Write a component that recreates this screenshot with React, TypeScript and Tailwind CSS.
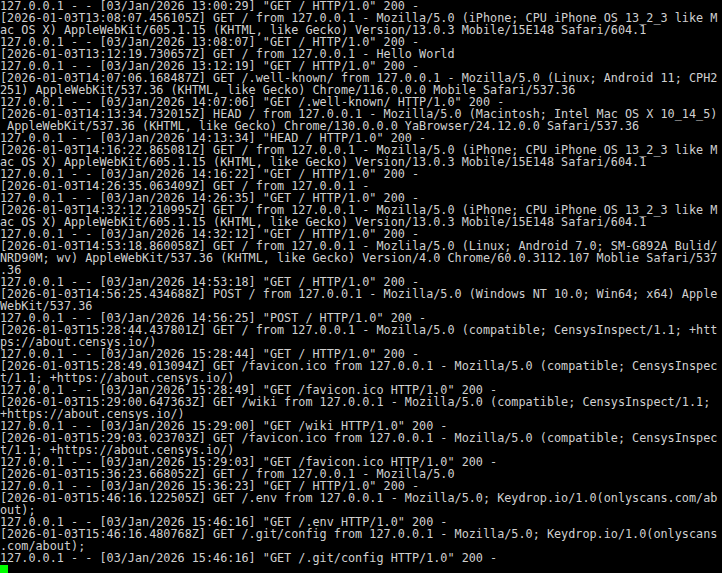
import React from 'react';

const lines: string[] = [
  '127.0.0.1 - - [03/Jan/2026 13:00:29] "GET / HTTP/1.0" 200 -',
  '[2026-01-03T13:08:07.456105Z] GET / from 127.0.0.1 - Mozilla/5.0 (iPhone; CPU iPhone OS 13_2_3 like M',
  'ac OS X) AppleWebKit/605.1.15 (KHTML, like Gecko) Version/13.0.3 Mobile/15E148 Safari/604.1',
  '127.0.0.1 - - [03/Jan/2026 13:08:07] "GET / HTTP/1.0" 200 -',
  '[2026-01-03T13:12:19.730657Z] GET / from 127.0.0.1 - Hello World',
  '127.0.0.1 - - [03/Jan/2026 13:12:19] "GET / HTTP/1.0" 200 -',
  '[2026-01-03T14:07:06.168487Z] GET /.well-known/ from 127.0.0.1 - Mozilla/5.0 (Linux; Android 11; CPH2',
  '251) AppleWebKit/537.36 (KHTML, like Gecko) Chrome/116.0.0.0 Mobile Safari/537.36',
  '127.0.0.1 - - [03/Jan/2026 14:07:06] "GET /.well-known/ HTTP/1.0" 200 -',
  '[2026-01-03T14:13:34.732015Z] HEAD / from 127.0.0.1 - Mozilla/5.0 (Macintosh; Intel Mac OS X 10_14_5)',
  ' AppleWebKit/537.36 (KHTML, like Gecko) Chrome/130.0.0.0 YaBrowser/24.12.0.0 Safari/537.36',
  '127.0.0.1 - - [03/Jan/2026 14:13:34] "HEAD / HTTP/1.0" 200 -',
  '[2026-01-03T14:16:22.865081Z] GET / from 127.0.0.1 - Mozilla/5.0 (iPhone; CPU iPhone OS 13_2_3 like M',
  'ac OS X) AppleWebKit/605.1.15 (KHTML, like Gecko) Version/13.0.3 Mobile/15E148 Safari/604.1',
  '127.0.0.1 - - [03/Jan/2026 14:16:22] "GET / HTTP/1.0" 200 -',
  '[2026-01-03T14:26:35.063409Z] GET / from 127.0.0.1 -',
  '127.0.0.1 - - [03/Jan/2026 14:26:35] "GET / HTTP/1.0" 200 -',
  '[2026-01-03T14:32:12.210995Z] GET / from 127.0.0.1 - Mozilla/5.0 (iPhone; CPU iPhone OS 13_2_3 like M',
  'ac OS X) AppleWebKit/605.1.15 (KHTML, like Gecko) Version/13.0.3 Mobile/15E148 Safari/604.1',
  '127.0.0.1 - - [03/Jan/2026 14:32:12] "GET / HTTP/1.0" 200 -',
  '[2026-01-03T14:53:18.860058Z] GET / from 127.0.0.1 - Mozlila/5.0 (Linux; Android 7.0; SM-G892A Bulid/',
  'NRD90M; wv) AppleWebKit/537.36 (KHTML, like Gecko) Version/4.0 Chrome/60.0.3112.107 Moblie Safari/537',
  '.36',
  '127.0.0.1 - - [03/Jan/2026 14:53:18] "GET / HTTP/1.0" 200 -',
  '[2026-01-03T14:56:25.434688Z] POST / from 127.0.0.1 - Mozilla/5.0 (Windows NT 10.0; Win64; x64) Apple',
  'WebKit/537.36',
  '127.0.0.1 - - [03/Jan/2026 14:56:25] "POST / HTTP/1.0" 200 -',
  '[2026-01-03T15:28:44.437801Z] GET / from 127.0.0.1 - Mozilla/5.0 (compatible; CensysInspect/1.1; +htt',
  'ps://about.censys.io/)',
  '127.0.0.1 - - [03/Jan/2026 15:28:44] "GET / HTTP/1.0" 200 -',
  '[2026-01-03T15:28:49.013094Z] GET /favicon.ico from 127.0.0.1 - Mozilla/5.0 (compatible; CensysInspec',
  't/1.1; +https://about.censys.io/)',
  '127.0.0.1 - - [03/Jan/2026 15:28:49] "GET /favicon.ico HTTP/1.0" 200 -',
  '[2026-01-03T15:29:00.647363Z] GET /wiki from 127.0.0.1 - Mozilla/5.0 (compatible; CensysInspect/1.1;',
  '+https://about.censys.io/)',
  '127.0.0.1 - - [03/Jan/2026 15:29:00] "GET /wiki HTTP/1.0" 200 -',
  '[2026-01-03T15:29:03.023703Z] GET /favicon.ico from 127.0.0.1 - Mozilla/5.0 (compatible; CensysInspec',
  't/1.1; +https://about.censys.io/)',
  '127.0.0.1 - - [03/Jan/2026 15:29:03] "GET /favicon.ico HTTP/1.0" 200 -',
  '[2026-01-03T15:36:23.668052Z] GET / from 127.0.0.1 - Mozilla/5.0',
  '127.0.0.1 - - [03/Jan/2026 15:36:23] "GET / HTTP/1.0" 200 -',
  '[2026-01-03T15:46:16.122505Z] GET /.env from 127.0.0.1 - Mozilla/5.0; Keydrop.io/1.0(onlyscans.com/ab',
  'out);',
  '127.0.0.1 - - [03/Jan/2026 15:46:16] "GET /.env HTTP/1.0" 200 -',
  '[2026-01-03T15:46:16.480768Z] GET /.git/config from 127.0.0.1 - Mozilla/5.0; Keydrop.io/1.0(onlyscans',
  '.com/about);',
  '127.0.0.1 - - [03/Jan/2026 15:46:16] "GET /.git/config HTTP/1.0" 200 -',
];

const App: React.FC = () => {
  return (
    <div className="w-[722px] h-[573px] bg-black overflow-hidden">
      {/* console output */}
      <div className="font-['DejaVu_Sans_Mono','Liberation_Mono',monospace] text-[11.8px] leading-[12px] text-[#d0d0d0] whitespace-pre">
        {lines.map((line, i) => (
          <div key={i} className="h-[12px]">
            {line}
          </div>
        ))}
        {/* cursor */}
        <div className="h-[12px] pt-[1px]">
          <div className="w-[8px] h-[10px] bg-[#00ff00]" />
        </div>
      </div>
    </div>
  );
};

export default App;
